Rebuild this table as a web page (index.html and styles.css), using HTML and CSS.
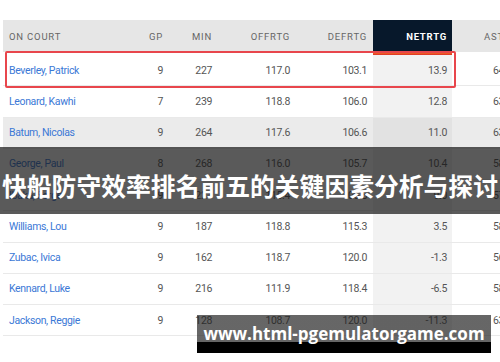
FILE: index.html
```html
<!DOCTYPE html>
<html lang="zh">
<head>
<meta charset="utf-8">
<title>快船防守效率</title>
<link rel="stylesheet" href="styles.css">
</head>
<body>
<div class="page">
  <div class="table">
    <div class="row head">
      <div class="cell name">On Court</div>
      <div class="cell">GP</div>
      <div class="cell">Min</div>
      <div class="cell">OffRtg</div>
      <div class="cell">DefRtg</div>
      <div class="cell net">NetRtg</div>
      <div class="cell">AST</div>
    </div>
    <div class="row">
      <div class="cell name">Beverley, Patrick</div>
      <div class="cell">9</div><div class="cell">227</div><div class="cell">117.0</div><div class="cell">103.1</div><div class="cell net">13.9</div><div class="cell">64</div>
    </div>
    <div class="row">
      <div class="cell name">Leonard, Kawhi</div>
      <div class="cell">7</div><div class="cell">239</div><div class="cell">118.8</div><div class="cell">106.0</div><div class="cell net">12.8</div><div class="cell">63</div>
    </div>
    <div class="row alt">
      <div class="cell name">Batum, Nicolas</div>
      <div class="cell">9</div><div class="cell">264</div><div class="cell">117.6</div><div class="cell">106.6</div><div class="cell net">11.0</div><div class="cell">63</div>
    </div>
    <div class="row">
      <div class="cell name">George, Paul</div>
      <div class="cell">8</div><div class="cell">268</div><div class="cell">116.0</div><div class="cell">105.7</div><div class="cell net">10.4</div><div class="cell">58</div>
    </div>
    <div class="row">
      <div class="cell name">Ibaka, Serge</div>
      <div class="cell">9</div><div class="cell">221</div><div class="cell">115.4</div><div class="cell">106.5</div><div class="cell net">9.0</div><div class="cell">57</div>
    </div>
    <div class="row">
      <div class="cell name">Williams, Lou</div>
      <div class="cell">9</div><div class="cell">187</div><div class="cell">118.8</div><div class="cell">115.3</div><div class="cell net">3.5</div><div class="cell">58</div>
    </div>
    <div class="row">
      <div class="cell name">Zubac, Ivica</div>
      <div class="cell">9</div><div class="cell">162</div><div class="cell">118.7</div><div class="cell">120.0</div><div class="cell net">-1.3</div><div class="cell">56</div>
    </div>
    <div class="row">
      <div class="cell name">Kennard, Luke</div>
      <div class="cell">9</div><div class="cell">216</div><div class="cell">111.9</div><div class="cell">118.4</div><div class="cell net">-6.5</div><div class="cell">58</div>
    </div>
    <div class="row">
      <div class="cell name">Jackson, Reggie</div>
      <div class="cell">9</div><div class="cell">128</div><div class="cell">108.7</div><div class="cell">120.0</div><div class="cell net">-11.3</div><div class="cell">63</div>
    </div>
  </div>
  <div class="highlight"></div>
  <div class="banner"><span>快船防守效率排名前五的关键因素分析与探讨</span></div>
  <div class="watermark"><span>www.html-pgemulatorgame.com</span></div>
</div>
</body>
</html>
```

FILE: styles.css
```css
html, body {
  margin: 0;
  padding: 0;
  background: #fff;
}
.page {
  position: relative;
  width: 500px;
  height: 362px;
  overflow: hidden;
  background: #fff;
  font-family: Roboto, "Liberation Sans", sans-serif;
}
.table {
  margin: 20px 0 0 3px;
  width: 507px;
}
.row {
  display: grid;
  grid-template-columns: 127px 39px 49px 78px 77px 79px 58px;
  height: 31.25px;
  box-sizing: border-box;
  border-bottom: 1px solid #e9e9e9;
  font-size: 10.5px;
  letter-spacing: -0.35px;
  color: #555;
}
.row.alt {
  background: #ebebeb;
}
.cell {
  display: flex;
  align-items: center;
  justify-content: flex-end;
  padding-right: 6px;
}
.cell.name {
  justify-content: flex-start;
  padding-left: 6px;
  padding-right: 0;
  color: #3b78d6;
}
.cell.net {
  background: #f2f2f2;
  padding-right: 5px;
}
.row.alt .cell.net {
  background: #e2e2e2;
}
.row.head {
  height: 35px;
  border-bottom: 0;
  background: linear-gradient(to bottom, #e6e6e6 0 32px, #fff 32px);
  font-size: 9.5px;
  letter-spacing: 0.8px;
  text-transform: uppercase;
  color: #666;
}
.row.head .cell {
  padding-bottom: 3px;
  box-sizing: border-box;
}
.row.head .cell.name {
  color: #666;
}
.row.head .cell.net {
  background: linear-gradient(to bottom, #07182b 0 32px, #f3a51c 32px, #ea5a22 33.5px, #df2e2a 35px);
  color: #fff;
  font-weight: 700;
}
.highlight {
  position: absolute;
  left: 5px;
  top: 51px;
  width: 451px;
  height: 37px;
  box-sizing: border-box;
  border: 2px solid #e8464c;
  border-radius: 2px;
}
.banner {
  position: absolute;
  left: 0;
  top: 147px;
  width: 500px;
  height: 67px;
  background: rgba(20, 20, 20, 0.7);
  display: flex;
  align-items: center;
  justify-content: center;
  padding-top: 8px;
  box-sizing: border-box;
}
.banner span {
  font-family: "Noto Sans CJK SC", sans-serif;
  font-weight: 700;
  font-size: 24.8px;
  color: #fff;
  white-space: nowrap;
  letter-spacing: 0;
}
.watermark {
  position: absolute;
  left: 197px;
  top: 315px;
  width: 294px;
  height: 38px;
  background: linear-gradient(to bottom, rgba(30, 30, 30, 0.68) 0 27px, #000 27px);
  display: flex;
  justify-content: center;
}
.watermark span {
  font-family: "Open Sans", "DejaVu Sans", sans-serif;
  font-weight: 700;
  font-size: 17px;
  line-height: 1;
  color: #fff;
  white-space: nowrap;
  margin-top: 10px;
}
```
